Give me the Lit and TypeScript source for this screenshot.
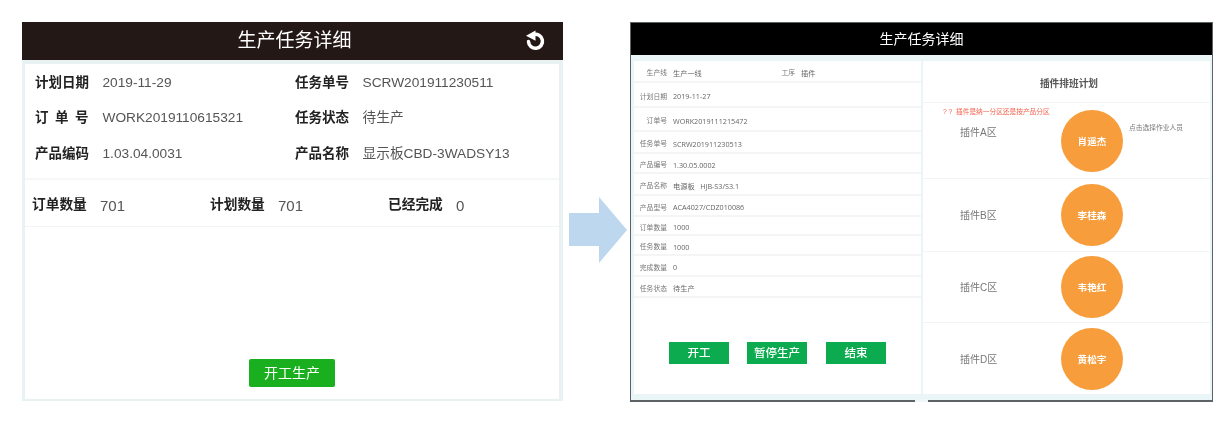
import { LitElement, html, css } from "lit";
import { customElement } from "lit/decorators.js";

const plan = [
  { h: 22, l: "生产线", v: "生产一线", l2: "工序", v2: "插件" },
  { h: 25, l: "计划日期", v: "2019-11-27" },
  { h: 24, l: "订单号", v: "WORK2019111215472" },
  { h: 22, l: "任务单号", v: "SCRW201911230513" },
  { h: 20, l: "产品编号", v: "1.30.05.0002" },
  { h: 22, l: "产品名称", v: "电源板   HJB-S3/S3.1" },
  { h: 21, l: "产品型号", v: "ACA4027/CDZ010086" },
  { h: 19, l: "订单数量", v: "1000" },
  { h: 20, l: "任务数量", v: "1000" },
  { h: 21, l: "完成数量", v: "0" },
  { h: 21, l: "任务状态", v: "待生产" },
];

const zones = [
  { h: 76, zone: "插件A区", who: "肖遥杰", first: true },
  { h: 73, zone: "插件B区", who: "李桂森" },
  { h: 71, zone: "插件C区", who: "韦艳红" },
  { h: 71, zone: "插件D区", who: "黄松宇" },
];

@customElement("app-root")
export class AppRoot extends LitElement {
  static styles = css`
    :host {
      display: block;
      width: 1226px;
      height: 422px;
      background: #fff;
      overflow: hidden;
      font-family: "Liberation Sans", "Noto Sans CJK SC", sans-serif;
      line-height: 1.2;
      filter: blur(0.35px);
    }
    .page {
      display: flex;
      align-items: flex-start;
      padding: 22px 0 0 22px;
    }
    .phone {
      width: 541px;
      height: 379px;
      display: flex;
      flex-direction: column;
      box-sizing: border-box;
    }
    .phone-head {
      height: 38px;
      flex: none;
      background: #231815;
      color: #fff;
      display: grid;
      grid-template-columns: 1fr auto 1fr;
      align-items: center;
      font-size: 19px;
    }
    .phone-head .name {
      margin-left: 4px;
    }
    .phone-head svg {
      justify-self: end;
      margin: 0 16px 2px 0;
      display: block;
    }
    .phone-body {
      flex: 1;
      background: #fff;
      border: solid #e8f2f2;
      border-width: 4px 4px 2px 3px;
      display: flex;
      flex-direction: column;
    }
    .info {
      flex: none;
      box-sizing: border-box;
      border-bottom: 2px solid #f6f8f8;
      display: grid;
      grid-template-columns: 260px 1fr;
      grid-auto-rows: 35.5px;
      padding: 1px 0 0 10px;
      height: 116px;
    }
    .pair {
      display: flex;
      align-items: center;
      font-size: 13.7px;
      color: #555;
    }
    .pair b {
      font-size: 13.5px;
      color: #222;
      width: 67.5px;
      flex: none;
      white-space: nowrap;
    }
    .pair b.spaced {
      letter-spacing: 6.5px;
    }
    .stats {
      height: 47px;
      flex: none;
      box-sizing: border-box;
      padding: 5px 0 0 7px;
      border-bottom: 1px solid #f2f5f5;
      display: grid;
      grid-template-columns: repeat(3, 178px);
    }
    .stats .pair {
      font-size: 15px;
    }
    .stats .pair b {
      width: 68px;
      font-size: 13.7px;
    }
    .start {
      margin: auto auto 12px;
      width: 86px;
      height: 28px;
      background: #1aaf1e;
      border-radius: 2px;
      color: #fff;
      font-size: 14px;
      display: flex;
      align-items: center;
      justify-content: center;
    }
    .arrow {
      flex: none;
      display: block;
      margin: 174px 3px 0 6px;
    }
    .desk {
      position: relative;
      width: 583px;
      height: 380px;
      box-sizing: border-box;
      border: 1px solid #5e6466;
      border-bottom-width: 2px;
      display: flex;
      flex-direction: column;
      background: #eaf5f7;
    }
    .desk-head {
      height: 32px;
      flex: none;
      background: #000;
      color: #fff;
      font-size: 14px;
      display: flex;
      align-items: center;
      justify-content: center;
    }
    .desk-body {
      display: grid;
      grid-template-columns: 287px 287px;
      gap: 2px;
      padding: 6px 0 0 3px;
    }
    .left, .right {
      background: #fff;
      height: 333px;
      display: flex;
      flex-direction: column;
    }
    .row {
      flex: none;
      box-sizing: border-box;
      border-bottom: 2px solid #f4f6f6;
      padding-top: 4px;
      display: grid;
      grid-template-columns: 33px 96px 20px 1fr;
      column-gap: 6px;
      align-items: center;
      font-size: 6.8px;
      color: #777;
      white-space: pre;
    }
    .row .k {
      text-align: right;
      padding-top: 1px;
    }
    .row .v {
      font-family: "Open Sans", "Noto Sans CJK SC", sans-serif;
      font-size: 7.2px;
      color: #666;
    }
    .actions {
      display: flex;
      padding: 44px 0 0 35px;
    }
    .actions span {
      width: 60px;
      height: 22px;
      padding-top: 1px;
      box-sizing: border-box;
      background: #0cab4f;
      color: #fff;
      font-size: 11.5px;
      font-weight: 500;
      display: flex;
      align-items: center;
      justify-content: center;
    }
    .actions span + span {
      margin-left: 18px;
    }
    .actions span:last-child {
      margin-left: 19px;
    }
    .title {
      height: 42px;
      flex: none;
      box-sizing: border-box;
      border-bottom: 1px solid #f2f5f5;
      display: flex;
      align-items: center;
      justify-content: center;
      padding: 4px 0 0 5px;
      font-size: 9.7px;
      font-weight: 700;
      color: #555;
    }
    .zone {
      position: relative;
      flex: none;
      box-sizing: border-box;
      border-bottom: 1px solid #f2f5f5;
      display: grid;
      grid-template-columns: 138px 62px 1fr;
      align-items: center;
    }
    .zone:last-child {
      border-bottom: 0;
    }
    .zone-name {
      padding: 2px 0 0 37px;
      font-size: 10px;
      color: #777;
    }
    .zone-name.up {
      margin-bottom: 18px;
    }
    .who {
      width: 62px;
      height: 62px;
      padding-top: 2px;
      box-sizing: border-box;
      border-radius: 50%;
      background: #f79d3c;
      color: #fff;
      font-size: 9.6px;
      font-weight: 700;
      display: flex;
      align-items: center;
      justify-content: center;
    }
    .tip {
      margin: 0 0 24px 6px;
      font-size: 6.75px;
      color: #777;
    }
    .note {
      position: absolute;
      left: 20px;
      top: 5px;
      font-size: 6.7px;
      color: #f4644e;
      white-space: pre;
    }
    .gap {
      position: absolute;
      left: 284px;
      bottom: -2px;
      width: 13px;
      height: 3px;
      background: #f0f7f8;
    }
  `;

  render() {
    return html`
      <div class="page">
        <section class="phone">
          <header class="phone-head">
            <span></span>
            <span class="name">生产任务详细</span>
            <svg width="22" height="22" viewBox="0 0 22 22" fill="none">
              <path d="M8.5 5.6a7 7 0 1 1-5 7" stroke="#fff" stroke-width="3.5" stroke-linecap="round" />
              <path d="M10.5 1.5 1 6.8l9.5 5z" fill="#fff" />
            </svg>
          </header>
          <div class="phone-body">
            <div class="info">
              <div class="pair"><b>计划日期</b><span>2019-11-29</span></div>
              <div class="pair"><b>任务单号</b><span>SCRW201911230511</span></div>
              <div class="pair"><b class="spaced">订单号</b><span>WORK2019110615321</span></div>
              <div class="pair"><b>任务状态</b><span>待生产</span></div>
              <div class="pair"><b>产品编码</b><span>1.03.04.0031</span></div>
              <div class="pair"><b>产品名称</b><span>显示板CBD-3WADSY13</span></div>
            </div>
            <div class="stats">
              <div class="pair"><b>订单数量</b><span>701</span></div>
              <div class="pair"><b>计划数量</b><span>701</span></div>
              <div class="pair"><b>已经完成</b><span>0</span></div>
            </div>
            <div class="start">开工生产</div>
          </div>
        </section>

        <svg class="arrow" width="58" height="68" viewBox="0 0 58 68">
          <polygon points="0,17 30,17 30,1 58,34 30,67 30,50 0,50" fill="#bdd7ee" />
        </svg>

        <section class="desk">
          <header class="desk-head">生产任务详细</header>
          <div class="desk-body">
            <div class="left">
              ${plan.map(
                (r) => html`
                  <div class="row" style="height:${r.h}px">
                    <span class="k">${r.l}</span>
                    <span class="v">${r.v}</span>
                    ${r.l2
                      ? html`<span class="k">${r.l2}</span><span class="v">${r.v2}</span>`
                      : ""}
                  </div>
                `
              )}
              <div class="actions">
                <span>开工</span>
                <span>暂停生产</span>
                <span>结束</span>
              </div>
            </div>
            <div class="right">
              <div class="title">插件排班计划</div>
              ${zones.map(
                (z) => html`
                  <div class="zone" style="height:${z.h}px">
                    ${z.first ? html`<span class="note">? ?  插件是纳一分区还是按产品分区</span>` : ""}
                    <span class="zone-name ${z.first ? "up" : ""}">${z.zone}</span>
                    <span class="who">${z.who}</span>
                    ${z.first ? html`<span class="tip">点击选择作业人员</span>` : ""}
                  </div>
                `
              )}
            </div>
          </div>
          <i class="gap"></i>
        </section>
      </div>
    `;
  }
}
